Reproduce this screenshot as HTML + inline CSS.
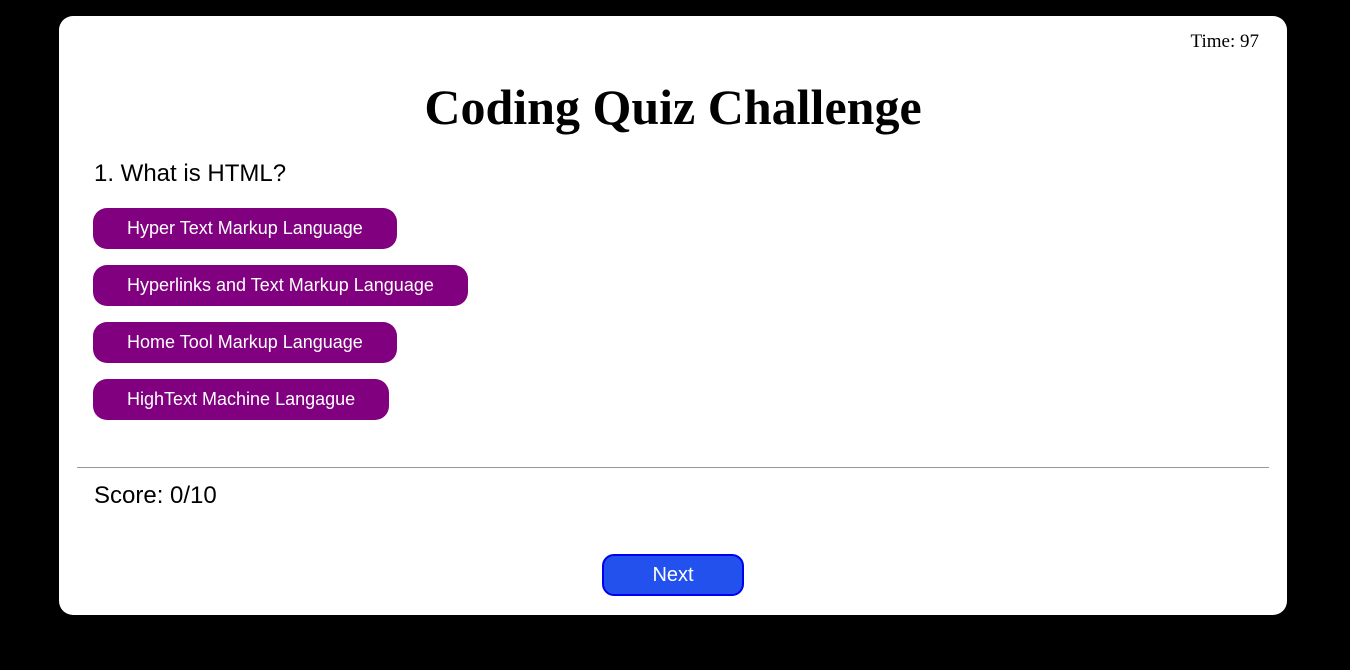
<!DOCTYPE html>
<html><head><style>
html,body{margin:0;padding:0;background:#000;width:1350px;height:670px;overflow:hidden}
.card{position:absolute;left:59px;top:16px;width:1228px;height:599px;background:#fff;border-radius:14px}
.time{position:absolute;right:28px;top:15px;font:19px "Liberation Serif",serif;color:#000}
h1{position:absolute;left:0;right:0;top:62px;margin:0;text-align:center;font:bold 50px "Liberation Serif",serif;color:#000;padding-left:0}
.q{position:absolute;left:35px;top:144px;font:24px "Liberation Sans",sans-serif}
.b{position:absolute;left:34px;height:41px;border-radius:14px;background:#800080;color:#fff;font:18px "Liberation Sans",sans-serif;line-height:41px;box-sizing:border-box;padding-left:34px}
hr{position:absolute;left:18px;top:451px;width:1192px;margin:0;border:0;border-top:1px solid #999}
.s{position:absolute;left:35px;top:466px;font:24px "Liberation Sans",sans-serif}
.n{position:absolute;left:543px;top:538px;width:142px;height:42px;box-sizing:border-box;border:2px solid #0000ee;border-radius:12px;background:#2251ee;color:#fff;font:20px "Liberation Sans",sans-serif;text-align:center;line-height:38px}
</style></head><body>
<div class="card">
<div class="time">Time: 97</div>
<h1>Coding Quiz Challenge</h1>
<div class="q">1. What is HTML?</div>
<div class="b" style="top:192px;width:304px">Hyper Text Markup Language</div>
<div class="b" style="top:249px;width:375px">Hyperlinks and Text Markup Language</div>
<div class="b" style="top:306px;width:304px">Home Tool Markup Language</div>
<div class="b" style="top:363px;width:296px">HighText Machine Langague</div>
<hr>
<div class="s">Score: 0/10</div>
<div class="n">Next</div>
</div>
</body></html>
